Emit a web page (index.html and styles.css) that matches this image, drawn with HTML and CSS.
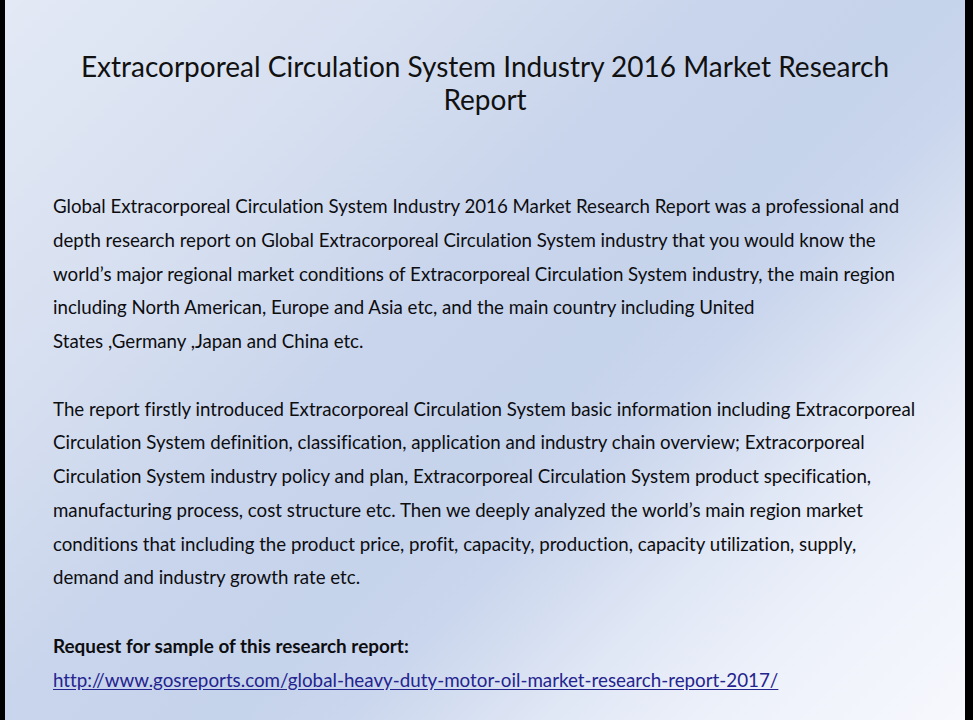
FILE: index.html
```html
<!DOCTYPE html>
<html lang="en">
<head>
<meta charset="utf-8">
<title>Extracorporeal Circulation System Industry 2016 Market Research Report</title>
<link rel="stylesheet" href="styles.css">
</head>
<body>
<main class="slide">
  <h1 class="title">
    <span class="line">Extracorporeal Circulation System Industry 2016 Market Research</span>
    <span class="line">Report</span>
  </h1>
  <section class="content">
    <p class="para">
      <span class="line">Global Extracorporeal Circulation System Industry 2016 Market Research Report was a professional and</span>
      <span class="line">depth research report on Global Extracorporeal Circulation System industry that you would know the</span>
      <span class="line">world’s major regional market conditions of Extracorporeal Circulation System industry, the main region</span>
      <span class="line">including North American, Europe and Asia etc, and the main country including United</span>
      <span class="line">States ,Germany ,Japan and China etc.</span>
    </p>
    <p class="para">
      <span class="line">The report firstly introduced Extracorporeal Circulation System basic information including Extracorporeal</span>
      <span class="line">Circulation System definition, classification, application and industry chain overview; Extracorporeal</span>
      <span class="line">Circulation System industry policy and plan, Extracorporeal Circulation System product specification,</span>
      <span class="line">manufacturing process, cost structure etc. Then we deeply analyzed the world’s main region market</span>
      <span class="line">conditions that including the product price, profit, capacity, production, capacity utilization, supply,</span>
      <span class="line">demand and industry growth rate etc.</span>
    </p>
    <p class="para request">
      <span class="line bold">Request for sample of this research report:</span>
      <a class="line link" href="#">http://www.gosreports.com/global-heavy-duty-motor-oil-market-research-report-2017/</a>
    </p>
  </section>
</main>
</body>
</html>
```

FILE: styles.css
```css
html, body {
  margin: 0;
  padding: 0;
  height: 100%;
}

body {
  background: #000;
  font-family: Lato, "Open Sans", "Liberation Sans", sans-serif;
  font-variant-ligatures: none;
  color: #0d0d10;
}

.slide {
  margin: 0 8px 0 5px;
  height: 720px;
  box-sizing: border-box;
  padding: 50px 0 0 48px;
  overflow: hidden;
  background: linear-gradient(135deg,
    #e3e9f5 0%,
    #d6dff0 25%,
    #c9d5ec 42%,
    #c5d3eb 56%,
    #cad6ed 63%,
    #e0e7f5 75%,
    #edf1fa 85%,
    #f6f8fd 100%);
}

.line {
  display: block;
  white-space: nowrap;
}

.title {
  margin: 0 48px 0 0;
  font-weight: 400;
  font-size: 28px;
  line-height: 33px;
  text-align: center;
  color: #111;
}

.content {
  margin-top: 74px;
  font-size: 18.7px;
  line-height: 33.75px;
}

.para {
  margin: 0 0 33.75px 0;
}

.bold {
  font-weight: 700;
  font-size: 18.9px;
}

.link {
  color: #24248f;
  font-size: 18.8px;
  text-decoration: underline;
  text-underline-offset: 2px;
}
```
